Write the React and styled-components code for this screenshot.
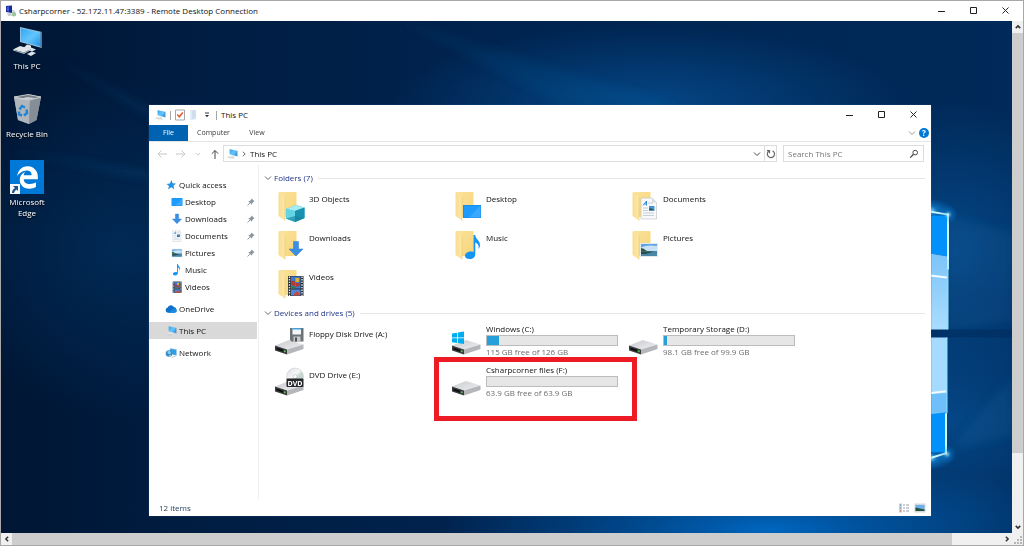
import React from "react";
import styled, { createGlobalStyle } from "styled-components";
import { FaEdgeLegacy } from "react-icons/fa6";

const GlobalStyle = createGlobalStyle`
  * {
    box-sizing: border-box;
  }

  body {
    margin: 0;
    font-family: "Open Sans", "Noto Sans", sans-serif;
    font-size: 8px;
    line-height: 12px;
    color: #111;
  }

  button,
  input {
    font: inherit;
    color: inherit;
    padding: 0;
    border: 0;
    background: none;
  }

  a {
    color: inherit;
    text-decoration: none;
  }

  svg {
    display: block;
    flex: none;
  }
`;

/* ---------- icons ---------- */

const Stroke = ({ d, size = 8, box = 8, width = 1, color = "#333", ...rest }) => (
  <svg width={size} height={size} viewBox={`0 0 ${box} ${box}`} fill="none" stroke={color} strokeWidth={width} {...rest}>
    <path d={d} />
  </svg>
);

const ChevronDown = (props) => <Stroke d="M1 2.5 4 5.5 7 2.5" {...props} />;
const ChevronUp = (props) => <Stroke d="M1 5.5 4 2.5 7 5.5" {...props} />;
const ChevronLeft = (props) => <Stroke d="M5.5 1 2.5 4 5.5 7" {...props} />;
const ChevronRight = (props) => <Stroke d="M2.5 1 5.5 4 2.5 7" {...props} />;
const ArrowLeft = (props) => <Stroke size={10} box={10} d="M10 5H1M4.5 1.5 1 5l3.5 3.5" {...props} />;
const ArrowRight = (props) => <Stroke size={10} box={10} d="M0 5h9M5.5 1.5 9 5 5.5 8.5" {...props} />;
const ArrowUp = (props) => <Stroke size={10} box={10} d="M5 10V1.5M1.8 4.7 5 1.5l3.2 3.2" {...props} />;

const PcIcon = ({ size = 12 }) => (
  <svg width={size} height={size} viewBox="0 0 34 34">
    <defs>
      <linearGradient id="pc-screen" x1="0" y1="0" x2="1" y2="1">
        <stop offset="0" stopColor="#2fa8f5" />
        <stop offset=".5" stopColor="#63c5fb" />
        <stop offset="1" stopColor="#1e90e6" />
      </linearGradient>
    </defs>
    <path d="M10 3 32 8v16L10 18z" fill="#8fc1e2" />
    <path d="M11 4.5 31 9v13.5L11 17z" fill="url(#pc-screen)" />
    <path d="M30.5 8 32 8v16l-1.5-.4z" fill="#5b7484" />
    <path d="M17 20.5 21 21.5v2l5 2-4 2-9-3z" fill="#dfe6ea" />
    <path d="M3 25.5 10 22l11 3-7 3.5z" fill="#e2e7ea" />
    <path d="M3 25.5 14 28.5l7-3.5v1l-7 4-11-3.5z" fill="#a9b3ba" />
    <path d="M17 30 22 27.5l4 1.5-5 3z" fill="#dde2e5" />
  </svg>
);

const RemoteIcon = () => (
  <svg width="12" height="12" viewBox="0 0 12 12">
    <path d="M1 1 7 .5v7.5L1 7z" fill="#1b2a8c" />
    <path d="M1.8 2 4 1.5V6.5L1.8 6z" fill="#3d5de0" />
    <path d="M2 8.5 6 8l1 2.5-4 .5z" fill="#c4cad2" />
    <path d="M7 4.5 10 5.5v5.5L7 10.5z" fill="#d4d8dc" />
    <circle cx="9" cy="9.300" r="2.2" fill="#9cc59c" />
  </svg>
);

const BinIcon = () => (
  <svg width="34" height="34" viewBox="0 0 34 34">
    <path d="M4 5 20 2.5 31 5l-4.5 23L19 32 8 28z" fill="#9aa2a9" />
    <path d="M4 5 20 7.5 19 32 8 28z" fill="#aeb5bb" />
    <path d="M20 7.5 31 5 26.5 28 19 32z" fill="#858e96" />
    <path d="M4 5 18 2.5 31 5 20 8z" fill="#70787f" stroke="#dce0e3" strokeWidth=".8" />
    <path d="M8 7.5 17 5l9 1-6 1.5z" fill="#c8cdd1" />
    <g fill="none" stroke="#1c83d8" strokeWidth="2.4">
      <path d="M9.5 17.5 12 14l3 1.5" />
      <path d="M16.5 17.5 17 21l-3 2.5" />
      <path d="M12 23.5 9 22.5 9 19.5" />
    </g>
  </svg>
);

const EdgeTile = styled.span`
  display: flex;
  position: relative;
  align-items: center;
  justify-content: center;
  width: 34px;
  height: 34px;
  background: #0078d7;
  color: #fff;
`;

const Shortcut = styled.svg`
  position: absolute;
  left: 0;
  bottom: 0;
`;

const EdgeIcon = () => (
  <EdgeTile>
    <FaEdgeLegacy size={23} />
    <Shortcut width="10" height="10" viewBox="0 0 10 10">
      <rect width="10" height="10" fill="#f4f8fb" />
      <path d="M3 2h5v5L6.5 5.5Q4.5 6.5 4 9H2Q2 5.5 5 4z" fill="#20538c" />
    </Shortcut>
  </EdgeTile>
);

const Monitor = () => (
  <>
    <rect x="11" y="15" width="18" height="13" fill="#0a84e0" />
    <rect x="11.5" y="15.5" width="17" height="12" fill="#1e9bff" />
    <path d="M28.5 15.5v12H17z" fill="#3aa8fd" />
  </>
);

const DownArrow = () => (
  <path d="M18.5 12.5h5V20H28l-7 7-7-7h4.5z" fill="#3a8fe3" stroke="#2a78cb" strokeWidth=".5" />
);

const Note = () => (
  <path
    d="M21.5 6h1.7c.4 4 5.3 6 4.8 10.5-.1 1.5-.8 2.7-1.5 3.5.6-3.5-.3-5.5-3.2-6.5v11.5c0 3-2.3 5-5.8 5-3 0-4.7-1.5-4.5-3.5.3-2.8 4.500-5 8.500-3.500z"
    fill="#1494f5"
  />
);

const Page = () => (
  <>
    <path d="M12 8h11l4.5 4.5V29H12z" fill="#f7f9fb" stroke="#b9c1c8" strokeWidth=".6" />
    <path d="M23 8v4.5h4.5z" fill="#d6dde3" />
    <path d="M14 15.5 17.5 11v4.5M15.3 14H18" stroke="#2d86d4" fill="none" />
    <path d="M19 13h5M14 18h5M14 20.5h5M14 23h11M14 25.5h11" stroke="#b8c4ce" strokeWidth=".8" />
    <rect x="20" y="16" width="5.5" height="4.5" fill="#4495cf" />
    <path d="M20 20.5v-1.5l2-1 3.5 2.5z" fill="#2b5b62" />
  </>
);

const Photo = () => (
  <>
    <rect x="11" y="14" width="18" height="14" fill="#e4e9ec" />
    <rect x="12" y="15" width="16" height="12" fill="#5ea5e6" />
    <path d="M12 18.500q6-3 16-1.500v5H12z" fill="#c9e1f5" />
    <path d="M12 19q3 0 5 2.5l4 1.5H12z" fill="#2f5a41" />
    <path d="M12 22h16v5H12z" fill="#4a86a8" />
    <path d="M12 22.500h13l-8 2.500h-5z" fill="#2d4e46" />
  </>
);

const Film = () => (
  <>
    <rect x="13" y="8" width="15.5" height="20" fill="#2c2f33" />
    <rect x="16" y="8.5" width="9.5" height="12" fill="#3f78cf" />
    <rect x="16" y="21.5" width="9.5" height="6" fill="#4b86dc" />
    <path d="M16 14q2.500-3 4 0v4l-4-1z" fill="#b23b34" />
    <path d="M20.5 10h3.500v4h-3.500z" fill="#d6b13a" />
    <path d="M21 15h4v2.500l-4 1.500z" fill="#b23b34" />
    <path d="M17 18.500h4l-1 2h-4z" fill="#3c7a3b" />
    <path d="M19 26l2-2.5 3 1V27.5h-5z" fill="#c94a38" />
    <path d="M14.5 8.5v19.5M27 8.5v19.5" stroke="#e6e8ea" strokeWidth="1.4" strokeDasharray="1.4 1.2" />
  </>
);

const Cube = () => (
  <>
    <path d="M11 19 21 15l8.5 2.5V28L20 32l-9-3.5z" fill="#35b4cf" />
    <path d="M11 19 21 15l8.5 2.5L20 21z" fill="#a5ecf3" />
    <path d="M11 19l9 2v11l-9-3.5z" fill="#62d4e4" />
    <path d="M20 21l9.5-3.5V28L20 32z" fill="#1992b0" />
    <path d="M11 28.5 20 26l9.5 2L20 32z" fill="#0f7f9b" opacity=".6" />
  </>
);

const overlays = {
  cube: Cube,
  monitor: Monitor,
  arrow: DownArrow,
  note: Note,
  page: Page,
  photo: Photo,
  film: Film,
};

const FolderIcon = ({ kind }) => {
  const Overlay = overlays[kind];
  return (
    <svg width="32" height="32" viewBox="0 0 32 32">
      <defs>
        <linearGradient id="folder-back" x1="0" y1="0" x2="1" y2="1">
          <stop offset="0" stopColor="#fbe39b" />
          <stop offset="1" stopColor="#f7d47a" />
        </linearGradient>
        <linearGradient id="folder-front" x1="0" y1="0" x2="1" y2="0">
          <stop offset="0" stopColor="#f9dd8f" />
          <stop offset="1" stopColor="#fce8a9" />
        </linearGradient>
      </defs>
      <path d="M4 2h17.5v25H5z" fill="url(#folder-back)" />
      <path d="M3.5 2.5 10 6.5V30.5L3.5 26z" fill="url(#folder-front)" />
      <path d="M10 7v23.5" stroke="#edc765" strokeWidth=".6" />
      <Overlay />
    </svg>
  );
};

// nav icons reuse the folder overlays, cropped to their own bounds
const crops = {
  monitor: "10 12 20 19",
  arrow: "12 11 18 18",
  page: "9 8 22 22",
  photo: "10 12 20 18",
  note: "9 6 25 25",
  film: "10 7 21 21",
};

const SmallIcon = ({ kind }) => {
  const Shape = overlays[kind];
  return (
    <svg width="12" height="12" viewBox={crops[kind]}>
      <Shape />
    </svg>
  );
};

const DriveIcon = ({ kind }) => (
  <svg width="32" height="32" viewBox="0 0 32 32">
    <defs>
      <linearGradient id="drive-top" x1="0" y1="0" x2="1" y2="1">
        <stop offset="0" stopColor="#c9cbce" />
        <stop offset="1" stopColor="#eeeff1" />
      </linearGradient>
      <linearGradient id="disc" x1="0" y1="0" x2="1" y2="1">
        <stop offset="0" stopColor="#d7dadd" />
        <stop offset=".45" stopColor="#f7f8f9" />
        <stop offset=".6" stopColor="#c9d8cf" />
        <stop offset="1" stopColor="#bfc4c9" />
      </linearGradient>
    </defs>
    <path d="M0 20.5 14 15 28.5 19.5 12 24.5z" fill="url(#drive-top)" />
    <path d="M12 24.5 28.5 19.5v4.5L12 29.5z" fill="#b4b6b9" />
    <path d="M0 20.5 12 24.5v5L0 25.5z" fill="#3a3c3e" />
    <path d="M1.5 22.5 8 24.7v2l-6.5-2.2z" fill="#0e0f10" />
    <rect x="9" y="25.5" width="1.6" height="1.6" fill="#4fd04f" />
    {kind === "windows" && (
      <path d="M0 8.5 5 7.7V12.5H0zM5.8 7.6 12 6.6V12.5H5.8zM0 13.3H5V18L0 17.3zM5.8 13.3H12V19l-6.2-.9z" fill="#00adef" />
    )}
    {kind === "floppy" && (
      <>
        <path d="M15 3h13.5v13.5H16.5L15 15z" fill="#6d7277" />
        <rect x="17.5" y="3" width="8.5" height="6.5" fill="#f2f5f7" />
        <rect x="17.5" y="3" width="8.5" height="1.5" fill="#3fa0dc" />
        <rect x="18.5" y="11.5" width="7" height="5" fill="#c5c9cd" />
        <rect x="20" y="12.5" width="2" height="4" fill="#4b5055" />
      </>
    )}
    {kind === "dvd" && (
      <>
        <circle cx="20" cy="10.5" r="8.5" fill="url(#disc)" stroke="#c4c8cc" strokeWidth=".5" />
        <circle cx="20" cy="10.5" r="2" fill="#fff" stroke="#b8bcc0" strokeWidth=".6" />
        <rect x="11.5" y="12.5" width="17" height="8.5" rx="1" fill="#26282a" />
        <text x="20" y="19.5" fill="#fff" fontSize="7" fontWeight="700" textAnchor="middle">
          DVD
        </text>
      </>
    )}
  </svg>
);

const StarIcon = () => (
  <svg width="12" height="12" viewBox="0 0 12 12">
    <path d="M6.5 1 7.6 4.3 11 4.5 8.5 6.7 9.2 10.3 6.2 8.3 3 10.5 4 7 1.5 5 4.9 4.5z" fill="#2492e0" />
  </svg>
);

const CloudIcon = () => (
  <svg width="12" height="12" viewBox="0 0 12 12">
    <path d="M3 9.8a2.7 2.7 0 0 1-.3-5.3A3.3 3.3 0 0 1 8.8 4a3 3 0 0 1 .7 5.8z" fill="#1070c8" />
    <path d="M3 9.8 8.5 5.6Q11.8 5.6 11.9 8q-.2 1.8-2 1.8z" fill="#1a8ae0" />
  </svg>
);

const NetworkIcon = () => (
  <svg width="12" height="12" viewBox="0 0 12 12">
    <path d="M5 1.5 11.5 2.5V8.5L5 7z" fill="#2f9de8" stroke="#a8cce4" strokeWidth=".5" />
    <circle cx="4" cy="6.5" r="3.3" fill="#3b8fc8" />
    <path d="M2 4.5 5 4l1 2-2 1.5zM4 8.5l2-1v1.5L4.5 9.8z" fill="#8fcbee" />
    <path d="M6 10l4-1 .8.6-4 1.2z" fill="#b9c2c9" />
  </svg>
);

const PinIcon = () => (
  <svg width="8" height="8" viewBox="0 0 8 8">
    <path d="M4.5.5 7.5 3.3 6.6 3.7 5.2 5.2 5 6.8 1.2 3.2 2.9 2.9 4.2 1.5z" fill="#8b959d" />
    <path d="M3 5 .5 7.5" stroke="#8b959d" strokeWidth=".9" />
  </svg>
);

const CheckDocIcon = () => (
  <svg width="10" height="12" viewBox="0 0 10 12">
    <path d="M.5 1h9v10h-9z" fill="#fff" stroke="#8d9297" strokeWidth=".8" />
    <path d="M2.3 5.5 4.3 7.8 7.8 3.5" fill="none" stroke="#e0592a" strokeWidth="1.4" />
  </svg>
);

const NewFolderIcon = () => (
  <svg width="8" height="12" viewBox="0 0 8 12">
    <path d="M1 1h6v7.5L6 10.5H1z" fill="#cfdff0" />
    <path d="M1 1 3 2v9L1 10z" fill="#e2ecf7" />
  </svg>
);

const CustomizeIcon = () => (
  <svg width="6" height="6" viewBox="0 0 6 6">
    <path d="M1 1h4" stroke="#333" />
    <path d="M1 3h4L3 5.2z" fill="#333" />
  </svg>
);

const RefreshIcon = () => (
  <svg width="10" height="10" viewBox="0 0 10 10" fill="none" stroke="#666" strokeWidth="1.2">
    <path d="M6.5 1.7A3.6 3.6 0 1 1 3 1.9" />
    <path d="M3.5 4.3V1.7H1" />
  </svg>
);

const SearchIcon = () => (
  <svg width="10" height="10" viewBox="0 0 10 10" fill="none" stroke="#444">
    <circle cx="6.2" cy="3.6" r="2.3" />
    <path d="M4.5 5.3 1.2 8.6" strokeWidth="1.3" />
  </svg>
);

const DetailsIcon = () => (
  <svg width="12" height="10" viewBox="0 0 12 10">
    <rect x="1" y=".5" width="3" height="9" fill="#c9d0d5" />
    <path d="M2 2h1M2 5h1" stroke="#4b8fc4" />
    <path d="M2 8h1" stroke="#d4553d" />
    <path d="M5 2h2M8 2h3M5 5h2M8 5h3M5 8h2M8 8h3" stroke="#9a9fa3" />
  </svg>
);

const ThumbsIcon = () => (
  <svg width="12" height="10" viewBox="0 0 12 10">
    <rect x=".5" y=".5" width="11" height="9" fill="#d4d8db" />
    <rect x="1.5" y="2" width="9" height="6" fill="#6db1ea" />
    <path d="M1.5 4.5 10.5 6.5V8h-9z" fill="#24513f" />
  </svg>
);

/* ---------- wallpaper ---------- */

const WallpaperSvg = styled.svg`
  position: absolute;
  inset: 0;
  width: 100%;
  height: 100%;
`;

const Wallpaper = () => (
  <WallpaperSvg viewBox="1 21 1011 513" preserveAspectRatio="none" aria-hidden="true">
    <defs>
      <linearGradient id="wp-base" x1="0" y1="0" x2="1" y2="0">
        <stop offset="0" stopColor="#001634" />
        <stop offset=".2" stopColor="#001d42" />
        <stop offset=".5" stopColor="#002450" />
        <stop offset="1" stopColor="#002a59" />
      </linearGradient>
      <radialGradient id="wp-top">
        <stop offset="0" stopColor="#054a8c" stopOpacity=".9" />
        <stop offset="1" stopColor="#054a8c" stopOpacity="0" />
      </radialGradient>
      <radialGradient id="wp-left">
        <stop offset="0" stopColor="#01305f" stopOpacity=".7" />
        <stop offset="1" stopColor="#01305f" stopOpacity="0" />
      </radialGradient>
      <radialGradient id="wp-bottom">
        <stop offset="0" stopColor="#0066bf" />
        <stop offset="1" stopColor="#0058a8" stopOpacity="0" />
      </radialGradient>
      <radialGradient id="wp-flare">
        <stop offset="0" stopColor="#fff" />
        <stop offset=".15" stopColor="#8fe4ff" />
        <stop offset=".4" stopColor="#18a0f5" stopOpacity=".5" />
        <stop offset="1" stopColor="#0078d7" stopOpacity="0" />
      </radialGradient>
      <linearGradient id="wp-pane" x1="0" y1="0" x2="0" y2="1">
        <stop offset="0" stopColor="#7cc4f8" />
        <stop offset="1" stopColor="#a9dcff" />
      </linearGradient>
      <filter id="wp-soft">
        <feGaussianBlur stdDeviation="4" />
      </filter>
    </defs>
    <rect x="1" y="21" width="1011" height="513" fill="url(#wp-base)" />
    <ellipse cx="120" cy="250" rx="200" ry="170" fill="url(#wp-left)" />
    <ellipse cx="650" cy="105" rx="260" ry="80" fill="url(#wp-top)" />
    <ellipse cx="950" cy="250" rx="150" ry="150" fill="url(#wp-top)" />
    <ellipse cx="950" cy="420" rx="150" ry="130" fill="url(#wp-top)" />
    <ellipse cx="770" cy="530" rx="330" ry="70" fill="url(#wp-bottom)" />
    <g fill="#2a86d0" filter="url(#wp-soft)">
      <path d="M400 21 680 105H560z" opacity=".08" />
      <path d="M50 55 149 108v10z" opacity=".12" />
      <path d="M1 150 149 172v8z" opacity=".14" />
      <path d="M948 216 1012 232v90L948 330z" opacity=".1" />
      <path d="M948 452 1012 436v-60z" opacity=".1" />
    </g>
    <rect x="930" y="330" width="82" height="8" fill="#002a5a" opacity=".5" />
    <ellipse cx="926" cy="211" rx="28" ry="13" fill="url(#wp-flare)" />
    <ellipse cx="926" cy="459" rx="28" ry="13" fill="url(#wp-flare)" />
    <path d="M930 216h18v41l-18-3z" fill="#0091fa" />
    <path d="M930 254 948 257v73H930z" fill="url(#wp-pane)" />
    <path d="M930 338h17v76H930z" fill="#a6dbff" />
    <path d="M930 394h17v20l-17 2z" fill="#6fc0fa" />
    <path d="M930 415l17-2v40h-17z" fill="#0091fa" />
    <path d="M930 276 947 278M930 394 946 392" stroke="#f2fbff" strokeWidth="2" />
    <path d="M930 212 948 215 948 270M930 459 946 454 946 414" stroke="#d5f8ff" strokeWidth="2" fill="none" />
    <path d="M948 260v70M947 338v76" stroke="#8ee6ff" strokeWidth="1" />
    <circle cx="948" cy="215" r="10" fill="url(#wp-flare)" opacity=".6" />
    <circle cx="947" cy="455" r="10" fill="url(#wp-flare)" opacity=".6" />
  </WallpaperSvg>
);

/* ---------- remote session frame ---------- */

const Session = styled.div`
  display: flex;
  flex-direction: column;
  min-height: 100vh;
  border: 1px solid #a8a8a8;
  background: #fff;
`;

const TitleBar = styled.header`
  display: flex;
  align-items: center;
  height: 20px;
  padding-right: 1px;
  padding-left: ${({ $inset }) => $inset}px;
  gap: ${({ $gap }) => $gap}px;
  background: #fff;
`;

const Title = styled.h1`
  flex: 1;
  margin: 0;
  font-size: 8px;
  font-weight: 400;
`;

const Controls = styled.div`
  display: flex;
`;

const ControlButton = styled.button`
  display: flex;
  align-items: center;
  justify-content: center;
  width: 32px;
  height: 20px;
`;

const WindowControls = () => (
  <Controls>
    <ControlButton aria-label="Minimize">
      <Stroke d="M0 4.5H7" color="#222" />
    </ControlButton>
    <ControlButton aria-label="Maximize">
      <Stroke d="M.5.5h6v6h-6z" color="#222" />
    </ControlButton>
    <ControlButton aria-label="Close">
      <Stroke d="M.5.5l6 6M6.5.5l-6 6" color="#222" />
    </ControlButton>
  </Controls>
);

const Viewport = styled.div`
  display: grid;
  flex: 1;
  grid-template-columns: 1fr 11px;
  grid-template-rows: 1fr 12px;
`;

const Desktop = styled.main`
  position: relative;
  background: #001d42;
`;

const ScrollBar = styled.div`
  display: flex;
  flex-direction: ${({ $vertical }) => ($vertical ? "column" : "row")};
  background: #f0f0f0;
`;

const ScrollButton = styled.button`
  display: flex;
  align-items: center;
  justify-content: center;
  width: 11px;
  height: 12px;
`;

const Track = styled.div`
  flex: 1;
`;

const Thumb = styled.div`
  width: ${({ $vertical }) => ($vertical ? "100%" : "95%")};
  height: ${({ $vertical }) => ($vertical ? "86%" : "100%")};
  background: #cdcdcd;
`;

const Grip = styled.svg`
  background: #f0f0f0;
`;

const DesktopIcons = styled.div`
  display: flex;
  position: relative;
  flex-direction: column;
  gap: 21px;
  width: 52px;
  padding-top: 3px;
`;

const Launcher = styled.a`
  display: flex;
  flex-direction: column;
  align-items: center;
  gap: 2px;
  line-height: 11px;
  text-align: center;
  color: #fff;
  text-shadow: 0 1px 2px #000;
`;

/* ---------- explorer window ---------- */

const Explorer = styled.section`
  display: flex;
  position: absolute;
  inset: 84px 81px 17px 148px;
  flex-direction: column;
  background: #fff;
  box-shadow: 0 0 1px #2b5f93;
`;

const QuickDivider = styled.span`
  width: 1px;
  height: 9px;
  background: #a5a5a5;
`;

const WindowTitle = styled.h2`
  flex: 1;
  margin: 0;
  font-size: 8px;
  font-weight: 400;
`;

const Ribbon = styled.nav`
  display: flex;
  align-items: center;
  height: 17px;
  padding-right: 2px;
  border-bottom: 1px solid #e4e4e4;
  font-size: 7px;
`;

const Tab = styled.button`
  width: ${({ $width }) => $width}px;
  height: 16px;
  color: ${({ $active }) => ($active ? "#fff" : "#3c3c3c")};
  background: ${({ $active }) => ($active ? "#0063b1" : "none")};
`;

const Spacer = styled.span`
  flex: 1;
`;

const HelpButton = styled.button`
  width: 10px;
  height: 10px;
  margin-left: 3px;
  border-radius: 50%;
  background: #0078d7;
  color: #fff;
  font-size: 8px;
  font-weight: 700;
  line-height: 10px;
`;

const AddressRow = styled.div`
  display: flex;
  align-items: center;
  height: 23px;
  padding: 0 7px 0 8px;
`;

const NavButtons = styled.div`
  display: flex;
  align-items: center;
  gap: 9px;
  width: 66px;
`;

const IconButton = styled.button`
  display: flex;
  align-items: center;
  justify-content: center;
`;

const CustomizeButton = styled(IconButton)`
  width: 11px;
`;

const AddressBar = styled.div`
  display: flex;
  flex: 1;
  align-items: center;
  height: 17px;
  padding-left: 2px;
  gap: 3px;
  border: 1px solid #dcdcdc;
`;

const Refresh = styled(IconButton)`
  width: 12px;
  height: 15px;
  border-left: 1px solid #dcdcdc;
`;

const SearchBox = styled.label`
  display: flex;
  align-items: center;
  width: 141px;
  height: 17px;
  margin-left: 6px;
  padding: 0 4px;
  border: 1px solid #dcdcdc;
`;

const SearchInput = styled.input`
  flex: 1;
  min-width: 0;
  outline: 0;

  &::placeholder {
    color: #767676;
    opacity: 1;
  }
`;

const Body = styled.div`
  display: flex;
  flex: 1;
`;

const SideNav = styled.nav`
  display: flex;
  flex-direction: column;
  gap: 5px;
  width: 110px;
  padding-top: 11px;
  padding-right: 1px;
  border-right: 1px solid #f0f0f0;
`;

const NavItem = styled.a`
  display: flex;
  align-items: center;
  gap: 2px;
  height: 17px;
  padding-right: 2px;
  padding-left: ${({ $nested }) => ($nested ? 22 : 16)}px;
  background: ${({ $selected }) => ($selected ? "#d9d9d9" : "none")};
`;

const Content = styled.div`
  flex: 1;
  padding: 5px 6px 0 5px;
`;

const GroupHeader = styled.button`
  display: flex;
  align-items: center;
  width: 100%;
  height: 16px;
  gap: 2px;
  color: #1e3287;

  &::after {
    content: "";
    flex: 1;
    height: 1px;
    margin-left: 3px;
    background: #e6e6e6;
  }
`;

const Tiles = styled.div`
  display: grid;
  grid-template-columns: repeat(auto-fill, 177px);
  grid-auto-rows: ${({ $row }) => $row}px;
  padding-top: 2px;
  padding-left: 11px;
`;

const Tile = styled.a`
  display: flex;
  position: relative;
  align-items: flex-start;
  gap: 2px;

  > svg {
    margin-top: 2px;
  }
`;

const TileName = styled.span`
  padding-top: 5px;
`;

const Volume = styled.span`
  display: flex;
  flex-direction: column;
  width: 132px;
`;

const Capacity = styled.span`
  height: 11px;
  border: 1px solid #bcbcbc;
  background: #e6e6e6;
`;

const Used = styled.span`
  display: block;
  height: 100%;
  background: #26a0da;
`;

const FreeSpace = styled.span`
  color: #6d6d6d;
`;

const Highlight = styled.span`
  position: absolute;
  inset: -7px -8px -16px -18px;
  border: 5px solid #ed1c24;
`;

const StatusBar = styled.footer`
  display: flex;
  align-items: center;
  height: 17px;
  padding: 0 5px 0 10px;
  gap: 4px;
  color: #1e395b;
`;

const quickAccess = [
  { name: "Desktop", kind: "monitor", pinned: true },
  { name: "Downloads", kind: "arrow", pinned: true },
  { name: "Documents", kind: "page", pinned: true },
  { name: "Pictures", kind: "photo", pinned: true },
  { name: "Music", kind: "note" },
  { name: "Videos", kind: "film" },
];

const folders = [
  { name: "3D Objects", kind: "cube" },
  { name: "Desktop", kind: "monitor" },
  { name: "Documents", kind: "page" },
  { name: "Downloads", kind: "arrow" },
  { name: "Music", kind: "note" },
  { name: "Pictures", kind: "photo" },
  { name: "Videos", kind: "film" },
];

const drives = [
  { name: "Floppy Disk Drive (A:)", kind: "floppy" },
  { name: "Windows (C:)", kind: "windows", used: 9, free: "115 GB free of 126 GB" },
  { name: "Temporary Storage (D:)", used: 2, free: "98.1 GB free of 99.9 GB" },
  { name: "DVD Drive (E:)", kind: "dvd" },
  { name: "Csharpcorner files (F:)", used: 0, free: "63.9 GB free of 63.9 GB", highlighted: true },
];

const Drive = ({ name, kind, used, free, highlighted }) => (
  <Tile href="#">
    <DriveIcon kind={kind} />
    {free ? (
      <Volume>
        <span>{name}</span>
        <Capacity>
          <Used style={{ width: `${used}%` }} />
        </Capacity>
        <FreeSpace>{free}</FreeSpace>
      </Volume>
    ) : (
      <TileName>{name}</TileName>
    )}
    {highlighted && <Highlight />}
  </Tile>
);

const ExplorerWindow = () => (
  <Explorer>
    <TitleBar $inset={5} $gap={4}>
      <PcIcon />
      <QuickDivider />
      <CheckDocIcon />
      <NewFolderIcon />
      <CustomizeButton aria-label="Customize toolbar">
        <CustomizeIcon />
      </CustomizeButton>
      <QuickDivider />
      <WindowTitle>This PC</WindowTitle>
      <WindowControls />
    </TitleBar>
    <Ribbon>
      <Tab $width={39} $active>
        File
      </Tab>
      <Tab $width={51}>Computer</Tab>
      <Tab $width={36}>View</Tab>
      <Spacer />
      <IconButton aria-label="Expand ribbon">
        <ChevronDown color="#999" />
      </IconButton>
      <HelpButton aria-label="Help">?</HelpButton>
    </Ribbon>
    <AddressRow>
      <NavButtons>
        <IconButton aria-label="Back">
          <ArrowLeft color="#c8c8c8" />
        </IconButton>
        <IconButton aria-label="Forward">
          <ArrowRight color="#c8c8c8" />
        </IconButton>
        <IconButton aria-label="Recent locations">
          <ChevronDown size={6} color="#bbb" />
        </IconButton>
        <IconButton aria-label="Up">
          <ArrowUp color="#444" />
        </IconButton>
      </NavButtons>
      <AddressBar>
        <PcIcon />
        <ChevronRight size={6} />
        <span>This PC</span>
        <Spacer />
        <IconButton aria-label="Previous locations">
          <ChevronDown color="#444" />
        </IconButton>
        <Refresh aria-label="Refresh">
          <RefreshIcon />
        </Refresh>
      </AddressBar>
      <SearchBox>
        <SearchInput type="text" placeholder="Search This PC" aria-label="Search This PC" />
        <SearchIcon />
      </SearchBox>
    </AddressRow>
    <Body>
      <SideNav>
        <div>
          <NavItem href="#">
            <StarIcon />
            Quick access
          </NavItem>
          {quickAccess.map(({ name, kind, pinned }) => (
            <NavItem href="#" key={name} $nested>
              <SmallIcon kind={kind} />
              {name}
              <Spacer />
              {pinned && <PinIcon />}
            </NavItem>
          ))}
        </div>
        <NavItem href="#">
          <CloudIcon />
          OneDrive
        </NavItem>
        <NavItem href="#" $selected>
          <PcIcon />
          This PC
        </NavItem>
        <NavItem href="#">
          <NetworkIcon />
          Network
        </NavItem>
      </SideNav>
      <Content>
        <GroupHeader>
          <ChevronDown color="#666" />
          Folders (7)
        </GroupHeader>
        <Tiles $row={39}>
          {folders.map(({ name, kind }) => (
            <Tile href="#" key={name}>
              <FolderIcon kind={kind} />
              <TileName>{name}</TileName>
            </Tile>
          ))}
        </Tiles>
        <GroupHeader>
          <ChevronDown color="#666" />
          Devices and drives (5)
        </GroupHeader>
        <Tiles $row={41}>
          {drives.map((drive) => (
            <Drive key={drive.name} {...drive} />
          ))}
        </Tiles>
      </Content>
    </Body>
    <StatusBar>
      12 items
      <Spacer />
      <IconButton aria-label="Details view">
        <DetailsIcon />
      </IconButton>
      <IconButton aria-label="Large thumbnails">
        <ThumbsIcon />
      </IconButton>
    </StatusBar>
  </Explorer>
);

const App = () => (
  <>
    <GlobalStyle />
    <Session>
      <TitleBar $inset={4} $gap={2}>
        <RemoteIcon />
        <Title>Csharpcorner - 52.172.11.47:3389 - Remote Desktop Connection</Title>
        <WindowControls />
      </TitleBar>
      <Viewport>
        <Desktop>
          <Wallpaper />
          <DesktopIcons>
            <Launcher href="#">
              <PcIcon size={34} />
              This PC
            </Launcher>
            <Launcher href="#">
              <BinIcon />
              Recycle Bin
            </Launcher>
            <Launcher href="#">
              <EdgeIcon />
              Microsoft Edge
            </Launcher>
          </DesktopIcons>
          <ExplorerWindow />
        </Desktop>
        <ScrollBar $vertical>
          <ScrollButton aria-label="Scroll up">
            <ChevronUp size={6} width={2} />
          </ScrollButton>
          <Track>
            <Thumb $vertical />
          </Track>
          <ScrollButton aria-label="Scroll down">
            <ChevronDown size={6} width={2} />
          </ScrollButton>
        </ScrollBar>
        <ScrollBar>
          <ScrollButton aria-label="Scroll left">
            <ChevronLeft size={6} width={2} />
          </ScrollButton>
          <Track>
            <Thumb />
          </Track>
          <ScrollButton aria-label="Scroll right">
            <ChevronRight size={6} width={2} />
          </ScrollButton>
        </ScrollBar>
        <Grip width="11" height="12" viewBox="0 0 11 12">
          <path d="M8 3h2v2H8zM5 6h2v2H5zM8 6h2v2H8zM2 9h2v2H2zM5 9h2v2H5zM8 9h2v2H8z" fill="#b5b5b5" />
        </Grip>
      </Viewport>
    </Session>
  </>
);

export default App;
